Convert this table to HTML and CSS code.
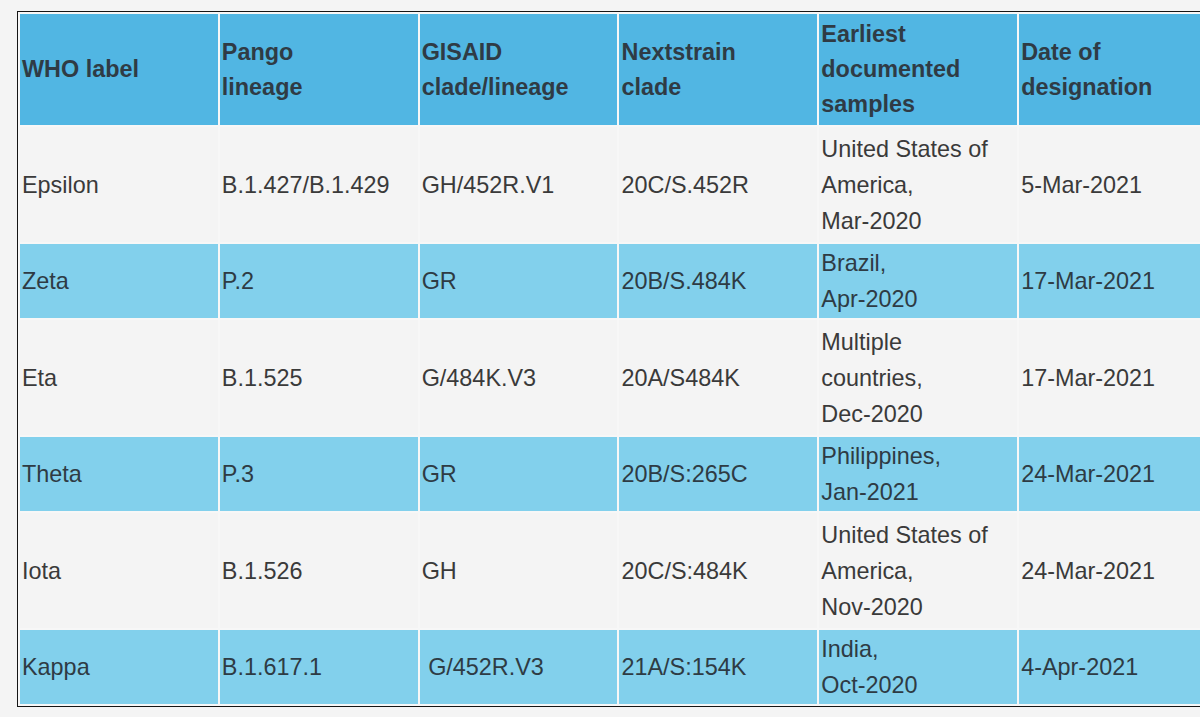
FILE: index.html
```html
<!DOCTYPE html>
<html lang="en">
<head>
<meta charset="utf-8">
<title>SARS-CoV-2 Variants of Interest</title>
<link rel="stylesheet" href="styles.css">
</head>
<body>
<table class="variants">
  <colgroup>
    <col class="col"><col class="col"><col class="col"><col class="col"><col class="col"><col class="col">
  </colgroup>
  <thead>
    <tr>
      <th>WHO label</th>
      <th>Pango<br>lineage</th>
      <th>GISAID<br>clade/lineage</th>
      <th>Nextstrain<br>clade</th>
      <th>Earliest<br>documented<br>samples</th>
      <th>Date of<br>designation</th>
    </tr>
  </thead>
  <tbody>
    <tr class="row-plain">
      <td>Epsilon</td>
      <td>B.1.427/B.1.429</td>
      <td>GH/452R.V1</td>
      <td>20C/S.452R</td>
      <td>United States of<br>America,<br>Mar-2020</td>
      <td>5-Mar-2021</td>
    </tr>
    <tr class="row-blue">
      <td>Zeta</td>
      <td>P.2</td>
      <td>GR</td>
      <td>20B/S.484K</td>
      <td>Brazil,<br>Apr-2020</td>
      <td>17-Mar-2021</td>
    </tr>
    <tr class="row-plain">
      <td>Eta</td>
      <td>B.1.525</td>
      <td>G/484K.V3</td>
      <td>20A/S484K</td>
      <td>Multiple<br>countries,<br>Dec-2020</td>
      <td>17-Mar-2021</td>
    </tr>
    <tr class="row-blue">
      <td>Theta</td>
      <td>P.3</td>
      <td>GR</td>
      <td>20B/S:265C</td>
      <td>Philippines,<br>Jan-2021</td>
      <td>24-Mar-2021</td>
    </tr>
    <tr class="row-plain">
      <td>Iota</td>
      <td>B.1.526</td>
      <td>GH</td>
      <td>20C/S:484K</td>
      <td>United States of<br>America,<br>Nov-2020</td>
      <td>24-Mar-2021</td>
    </tr>
    <tr class="row-blue">
      <td>Kappa</td>
      <td>B.1.617.1</td>
      <td>&nbsp;G/452R.V3</td>
      <td>21A/S:154K</td>
      <td>India,<br>Oct-2020</td>
      <td>4-Apr-2021</td>
    </tr>
  </tbody>
</table>
</body>
</html>
```

FILE: styles.css
```css
html, body {
  margin: 0;
  padding: 0;
  overflow: hidden;
  background: #f4f4f4;
}

body {
  padding: 11px 0 0 17px;
  font-family: "Liberation Sans", Arial, sans-serif;
  color: #3a3a3a;
}

.variants {
  table-layout: fixed;
  width: 1203px;
  border: 1.5px solid #151515;
  border-spacing: 2px;
  background: #f7f7f7;
  font-size: 23.4px;
}

.col {
  width: 197.5px;
}

.variants th {
  background: #51b6e3;
  color: #2f3b45;
  font-weight: bold;
  text-align: left;
  vertical-align: middle;
  line-height: 35px;
  padding: 3px 2px;
}

.variants td {
  text-align: left;
  vertical-align: middle;
  line-height: 36px;
  white-space: nowrap;
}

.row-plain td {
  background: #f4f4f4;
  padding: 3.5px 2px;
}

.row-blue td {
  background: #82d0ec;
  color: #2e3b44;
  padding: 1px 2px;
}
```
